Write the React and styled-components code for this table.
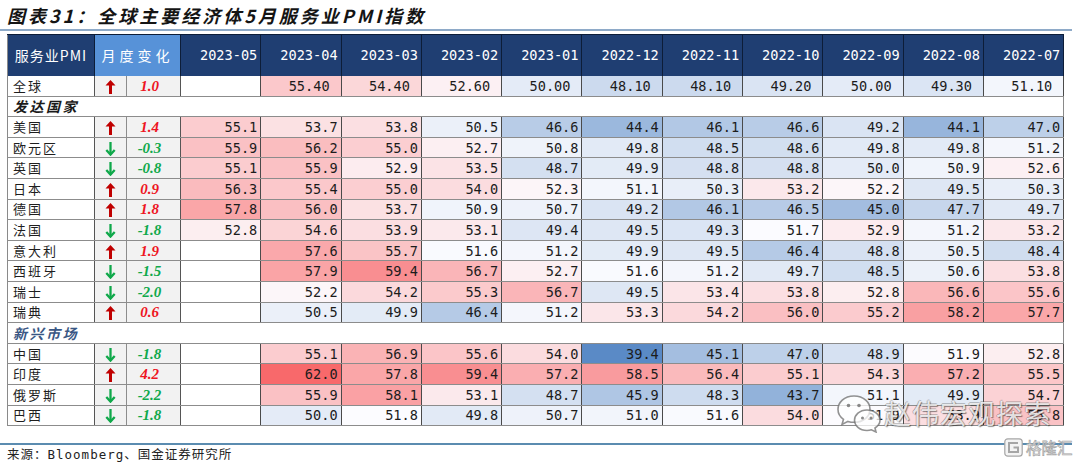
import React from 'react';
import styled, { createGlobalStyle } from 'styled-components';

const GlobalStyle = createGlobalStyle`
  html, body {
    margin: 0;
    padding: 0;
    background: #ffffff;
  }
  body {
    width: 1080px;
    height: 466px;
    overflow: hidden;
    font-family: "Noto Sans CJK SC", sans-serif;
  }
`;

const MONO = `"DejaVu Sans Mono", "Noto Sans CJK SC", monospace`;
const CJK = `"Noto Sans CJK SC", sans-serif`;

const months = [
  '2023-05', '2023-04', '2023-03', '2023-02', '2023-01', '2022-12',
  '2022-11', '2022-10', '2022-09', '2022-08', '2022-07',
];

const globalRow = {
  name: '全球',
  change: 1.0,
  values: [null, 55.4, 54.4, 52.6, 50.0, 48.1, 48.1, 49.2, 50.0, 49.3, 51.1],
};

const groups = [
  {
    title: '发达国家',
    tone: 'dark',
    rows: [
      { name: '美国', change: 1.4, values: [55.1, 53.7, 53.8, 50.5, 46.6, 44.4, 46.1, 46.6, 49.2, 44.1, 47.0] },
      { name: '欧元区', change: -0.3, values: [55.9, 56.2, 55.0, 52.7, 50.8, 49.8, 48.5, 48.6, 49.8, 49.8, 51.2] },
      { name: '英国', change: -0.8, values: [55.1, 55.9, 52.9, 53.5, 48.7, 49.9, 48.8, 48.8, 50.0, 50.9, 52.6] },
      { name: '日本', change: 0.9, values: [56.3, 55.4, 55.0, 54.0, 52.3, 51.1, 50.3, 53.2, 52.2, 49.5, 50.3] },
      { name: '德国', change: 1.8, values: [57.8, 56.0, 53.7, 50.9, 50.7, 49.2, 46.1, 46.5, 45.0, 47.7, 49.7] },
      { name: '法国', change: -1.8, values: [52.8, 54.6, 53.9, 53.1, 49.4, 49.5, 49.3, 51.7, 52.9, 51.2, 53.2] },
      { name: '意大利', change: 1.9, values: [null, 57.6, 55.7, 51.6, 51.2, 49.9, 49.5, 46.4, 48.8, 50.5, 48.4] },
      { name: '西班牙', change: -1.5, values: [null, 57.9, 59.4, 56.7, 52.7, 51.6, 51.2, 49.7, 48.5, 50.6, 53.8] },
      { name: '瑞士', change: -2.0, values: [null, 52.2, 54.2, 55.3, 56.7, 49.5, 53.4, 53.8, 52.8, 56.6, 55.6] },
      { name: '瑞典', change: 0.6, values: [null, 50.5, 49.9, 46.4, 51.2, 53.3, 54.2, 56.0, 55.2, 58.2, 57.7] },
    ],
  },
  {
    title: '新兴市场',
    tone: 'blue',
    rows: [
      { name: '中国', change: -1.8, values: [null, 55.1, 56.9, 55.6, 54.0, 39.4, 45.1, 47.0, 48.9, 51.9, 52.8] },
      { name: '印度', change: 4.2, values: [null, 62.0, 57.8, 59.4, 57.2, 58.5, 56.4, 55.1, 54.3, 57.2, 55.5] },
      { name: '俄罗斯', change: -2.2, values: [null, 55.9, 58.1, 53.1, 48.7, 45.9, 48.3, 43.7, 51.1, 49.9, 54.7] },
      { name: '巴西', change: -1.8, values: [null, 50.0, 51.8, 49.8, 50.7, 51.0, 51.6, 54.0, 51.9, 53.9, 55.8] },
    ],
  },
];

// three colour scale like the spreadsheet: blue - white - red, midpoint at median
const allValues = [globalRow, ...groups.flatMap((g) => g.rows)]
  .flatMap((r) => r.values)
  .filter((v) => v != null)
  .sort((a, b) => a - b);
const vMin = allValues[0];
const vMax = allValues[allValues.length - 1];
const vMid = allValues[Math.floor(allValues.length / 2)];

function heat(v) {
  if (v == null) return '#ffffff';
  const white = [252, 252, 255];
  const red = [248, 105, 107];
  const blue = [90, 138, 198];
  let t;
  let to;
  if (v >= vMid) {
    t = (v - vMid) / (vMax - vMid);
    to = red;
  } else {
    t = (vMid - v) / (vMid - vMin);
    to = blue;
  }
  const c = white.map((w, i) => Math.round(w + (to[i] - w) * t));
  return `rgb(${c[0]}, ${c[1]}, ${c[2]})`;
}

const Page = styled.div`
  position: relative;
  width: 1080px;
  height: 466px;
  display: flex;
  flex-direction: column;
`;

const Title = styled.h1`
  margin: 0;
  padding-left: 7px;
  height: 29px;
  line-height: 30px;
  font-family: ${CJK};
  font-size: 18px;
  font-weight: 700;
  font-style: italic;
  letter-spacing: 3px;
  color: #141414;
  white-space: nowrap;
`;

const Rule = styled.div`
  width: 1072px;
  height: ${(p) => p.$thick}px;
  background: ${(p) => p.$color};
  flex: none;
`;

const Table = styled.table`
  margin: 3px 0 0 7px;
  width: 1056px;
  table-layout: fixed;
  border-collapse: collapse;
  border-left: 1px solid #8a8a8a;
  border-right: 1px solid #8a8a8a;
`;

const HeadRow = styled.tr`
  height: 41px;
`;

const HeadCell = styled.th`
  padding: 0 ${(p) => (p.$align === 'right' ? '3px' : '0')} 0 0;
  background: ${(p) => (p.$light ? '#5792d8' : '#1f3e72')};
  color: #ffffff;
  font-family: ${(p) => (p.$cjk ? CJK : MONO)};
  font-size: ${(p) => (p.$cjk ? '14px' : '13.6px')};
  font-weight: 400;
  letter-spacing: ${(p) => p.$spacing || '0px'};
  text-align: ${(p) => p.$align || 'center'};
  border-right: 1px solid #0d1d38;
  border-top: 1px solid #0d1d38;
  white-space: nowrap;
`;

const Row = styled.tr`
  height: 20.6px;
`;

const NameCell = styled.td`
  padding: 0 0 0 5px;
  font-family: ${CJK};
  font-size: 13px;
  letter-spacing: 2px;
  color: #1e1e1e;
  border-bottom: 1px solid #8c8c8c;
  border-right: 1px solid #555555;
  white-space: nowrap;
  line-height: 18px;
`;

const ArrowCell = styled.td`
  padding: 2px 0 0 0;
  background: #f2f2f2;
  text-align: center;
  border-bottom: 1px solid #8c8c8c;
  border-right: 1px solid #8c8c8c;
  line-height: 0;
`;

const ChangeCell = styled.td`
  padding: 0 8px 0 0;
  background: #f2f2f2;
  font-family: "Liberation Serif", serif;
  font-size: 15px;
  font-weight: 700;
  font-style: italic;
  text-align: center;
  color: ${(p) => (p.$up ? '#ee1522' : '#10a94c')};
  border-bottom: 1px solid #8c8c8c;
  border-right: 1px solid #555555;
  line-height: 18px;
`;

const ValueCell = styled.td`
  padding: 0 ${(p) => (p.$wide ? '11px' : '3px')} 0 0;
  background: ${(p) => p.$bg};
  font-family: ${MONO};
  font-size: 13.6px;
  color: #1c1c1c;
  text-align: right;
  border-bottom: 1px solid #8c8c8c;
  border-right: 1px solid #4a4a4a;
  white-space: nowrap;
  line-height: 18px;
`;

const SectionCell = styled.td`
  padding: 0 0 0 5px;
  font-family: ${CJK};
  font-size: 14px;
  font-style: italic;
  font-weight: 700;
  letter-spacing: 2.5px;
  color: ${(p) => (p.$tone === 'blue' ? '#3a5784' : '#1a1a1a')};
  border-bottom: 1px solid #8c8c8c;
  line-height: 18px;
`;

const Footer = styled.div`
  padding-left: 7px;
  margin-top: 1px;
  font-family: ${MONO};
  font-size: 12.5px;
  letter-spacing: 1px;
  line-height: 17px;
  color: #222222;
  white-space: nowrap;
`;

const Spacer = styled.div`
  height: ${(p) => p.$h}px;
  flex: none;
`;

const Watermark = styled.div`
  position: absolute;
  left: 836px;
  top: 393px;
  display: flex;
  align-items: center;
  gap: 2px;
  pointer-events: none;
`;

const WatermarkText = styled.span`
  font-family: ${CJK};
  font-size: 27px;
  letter-spacing: 1px;
  color: rgba(255, 255, 255, 0.82);
  text-shadow: 1px 1px 1px rgba(0, 0, 0, 0.45), -1px 0 0 rgba(90, 90, 90, 0.35),
    0 -1px 0 rgba(90, 90, 90, 0.35);
  line-height: 36px;
`;

const Brand = styled.div`
  position: absolute;
  left: 1004px;
  top: 437px;
  display: flex;
  align-items: center;
  gap: 3px;
  pointer-events: none;
`;

const BrandText = styled.span`
  font-family: ${CJK};
  font-size: 15.5px;
  color: #f4f4f4;
  -webkit-text-stroke: 0.7px #a6a6a6;
  line-height: 20px;
`;

const UpArrow = () => (
  <svg width="11" height="14" viewBox="0 0 11 14">
    <polygon points="5.5,0 10.5,5.6 7,5.6 7,14 4,14 4,5.6 0.5,5.6" fill="#c00000" />
  </svg>
);

const DownArrow = () => (
  <svg width="11" height="14" viewBox="0 0 11 14">
    <path d="M5.5 0 V12.4" stroke="#0fa84a" strokeWidth="2.3" />
    <path d="M1.3 8 L5.5 12.6 L9.7 8" stroke="#0fa84a" strokeWidth="2.3" fill="none" />
  </svg>
);

const WeChatMark = () => (
  <svg width="46" height="40" viewBox="0 0 46 40">
    <g fill="rgba(255,255,255,0.75)" stroke="rgba(110,110,110,0.75)" strokeWidth="1.6">
      <path d="M18 3 C8 3 2 9.5 2 16.5 C2 20.5 4.2 24 7.5 26.3 L6 31.5 L12 28.4 C14 29 16 29.3 18 29.3 C28 29.3 34 23 34 16.2 C34 9.5 28 3 18 3 Z" />
      <path d="M31 17 C23.5 17 18.5 22 18.5 27.3 C18.5 32.6 23.5 37.5 31 37.5 C32.6 37.5 34 37.3 35.4 36.8 L40 39 L39 35 C42 33 44 30.3 44 27.3 C44 22 38.7 17 31 17 Z" />
    </g>
    <g fill="rgba(110,110,110,0.8)">
      <circle cx="12.5" cy="12.5" r="1.8" />
      <circle cx="23" cy="12.5" r="1.8" />
      <circle cx="26.5" cy="25" r="1.5" />
      <circle cx="35" cy="25" r="1.5" />
    </g>
  </svg>
);

const BrandMark = () => (
  <svg width="19" height="19" viewBox="0 0 19 19">
    <rect x="0.8" y="0.8" width="17.4" height="17.4" rx="3" fill="#f4f4f4" stroke="#a6a6a6" strokeWidth="1.2" />
    <path d="M14 5 H5 V14 H14 V9.5 H9.5" fill="none" stroke="#a6a6a6" strokeWidth="2" />
  </svg>
);

function DataRow({ row, wide }) {
  const up = row.change > 0;
  return (
    <Row>
      <NameCell>{row.name}</NameCell>
      <ArrowCell>{up ? <UpArrow /> : <DownArrow />}</ArrowCell>
      <ChangeCell $up={up}>{row.change.toFixed(1)}</ChangeCell>
      {row.values.map((v, i) => (
        <ValueCell key={i} $bg={heat(v)} $wide={wide}>
          {v == null ? '' : v.toFixed(wide ? 2 : 1)}
        </ValueCell>
      ))}
    </Row>
  );
}

export default function App() {
  return (
    <>
      <GlobalStyle />
      <Page>
        <Title>图表31：全球主要经济体5月服务业PMI指数</Title>
        <Rule $thick={2} $color="#8eaac8" />
        <Table>
          <colgroup>
            <col style={{ width: 87 }} />
            <col style={{ width: 32 }} />
            <col style={{ width: 54 }} />
            {months.map((m) => (
              <col key={m} style={{ width: 80.3 }} />
            ))}
          </colgroup>
          <thead>
            <HeadRow>
              <HeadCell $cjk $spacing="1px">服务业PMI</HeadCell>
              <HeadCell $cjk $light $spacing="4px" colSpan={2}>
                月度变化
              </HeadCell>
              {months.map((m) => (
                <HeadCell key={m} $align="right">
                  {m}
                </HeadCell>
              ))}
            </HeadRow>
          </thead>
          <tbody>
            <DataRow row={globalRow} wide />
            {groups.map((g) => (
              <React.Fragment key={g.title}>
                <Row>
                  <SectionCell colSpan={14} $tone={g.tone}>
                    {g.title}
                  </SectionCell>
                </Row>
                {g.rows.map((r) => (
                  <DataRow key={r.name} row={r} />
                ))}
              </React.Fragment>
            ))}
          </tbody>
        </Table>
        <Spacer $h={17} />
        <Rule $thick={2} $color="#5b8cb0" />
        <Footer>来源：Bloomberg、国金证券研究所</Footer>
        <Watermark>
          <WeChatMark />
          <WatermarkText>赵伟宏观探索</WatermarkText>
        </Watermark>
        <Brand>
          <BrandMark />
          <BrandText>格隆汇</BrandText>
        </Brand>
      </Page>
    </>
  );
}
